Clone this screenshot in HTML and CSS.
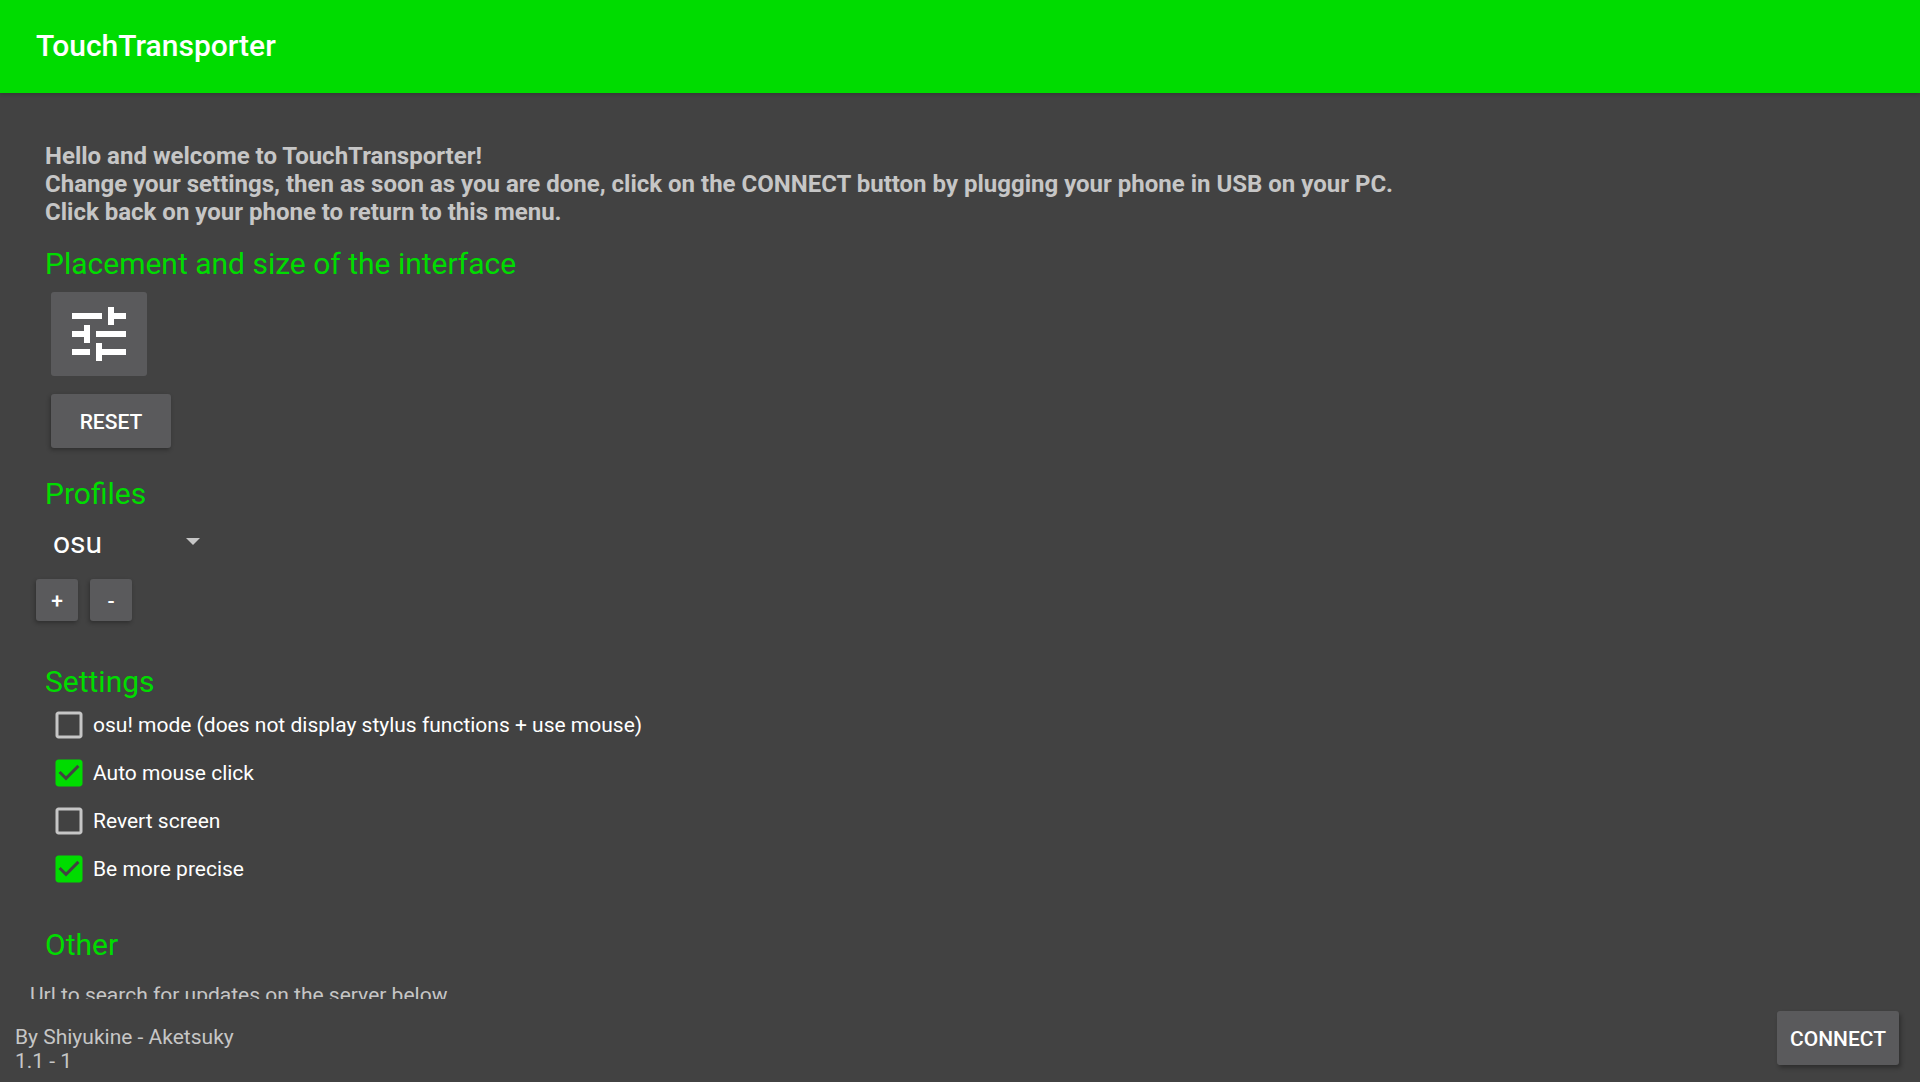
FILE: index.html
```html
<!DOCTYPE html>
<html lang="en">
<head>
    <meta charset="UTF-8">
    <meta name="viewport" content="width=device-width, initial-scale=1.0">
    <title>TouchTransporter</title>
    <link rel="stylesheet" href="styles.css">
</head>
<body>

    <header class="app-bar">
        <h1>TouchTransporter</h1>
    </header>

    <main class="content">
        <p class="intro">
            Hello and welcome to TouchTransporter!<br>
            Change your settings, then as soon as you are done, click on the CONNECT button by plugging your phone in USB on your PC.<br>
            Click back on your phone to return to this menu.
        </p>

        <section class="placement">
            <h2>Placement and size of the interface</h2>
            <div class="placement-buttons">
                <button type="button" class="button button-icon" aria-label="Adjust">
                    <svg viewBox="0 0 24 24" width="72" height="72" fill="currentColor" aria-hidden="true">
                        <path d="M3 17v2h6v-2H3zM3 5v2h10V5H3zm10 16v-2h8v-2h-8v-2h-2v6h2zM7 9v2H3v2h4v2h2V9H7zm14 4v-2H11v2h10zm-6-4h2V7h4V5h-4V3h-2v6z"/>
                    </svg>
                </button>
                <button type="button" class="button button-raised button-reset">RESET</button>
            </div>
        </section>

        <section class="profiles">
            <h2 id="profiles-title">Profiles</h2>
            <select class="profile-select" aria-labelledby="profiles-title">
                <option selected>osu</option>
            </select>
            <div class="profile-buttons">
                <button type="button" class="button button-raised button-small">+</button>
                <button type="button" class="button button-raised button-small">-</button>
            </div>
        </section>

        <section class="settings">
            <h2>Settings</h2>
            <label class="option"><input type="checkbox"> osu! mode (does not display stylus functions + use mouse)</label>
            <label class="option"><input type="checkbox" checked> Auto mouse click</label>
            <label class="option"><input type="checkbox"> Revert screen</label>
            <label class="option"><input type="checkbox" checked> Be more precise</label>
        </section>

        <section class="other">
            <h2>Other</h2>
            <p class="update-note">Url to search for updates on the server below</p>
        </section>
    </main>

    <footer class="bottom-bar">
        <p>By Shiyukine - Aketsuky<br>1.1 - 1</p>
        <button type="button" class="button button-raised button-connect">CONNECT</button>
    </footer>

</body>
</html>
```
FILE: styles.css
```css
* {
    box-sizing: border-box;
}
body {
    display: flex;
    flex-direction: column;
    height: 100vh;
    margin: 0;
    background: #424242;
    color: #c6c6c6;
    font-family: Roboto, sans-serif;
    font-size: 21px;
    line-height: 24px;
}
h1, h2, p {
    margin: 0;
}
h1 {
    color: #fff;
    font-size: 30px;
    font-weight: 500;
    line-height: 36px;
}
h2 {
    padding-left: 45px;
    color: #00dc00;
    font-size: 30px;
    font-weight: 400;
    line-height: 36px;
}

/* Top bar */
.app-bar {
    flex: none;
    padding: 28px 36px 29px;
    background: #00dc00;
    box-shadow: 0 1px 4px rgba(0, 0, 0, 0.2);
    z-index: 1;
}

/* Scrolling area */
.content {
    flex: 1;
    min-height: 0;
    padding-top: 49px;
    overflow: hidden;
}
.intro {
    padding: 0 45px;
    font-size: 24px;
    font-weight: 700;
    line-height: 28px;
}
.placement {
    margin-top: 20px;
}
.profiles {
    margin-top: 28px;
}
.settings {
    margin-top: 43px;
}
.settings h2 {
    margin-bottom: 1px;
}
.other {
    margin-top: 34px;
}
.update-note {
    margin-top: 20px;
    padding-left: 30px;
}

/* Buttons */
.button {
    padding: 2px 0 0;
    border: 0;
    border-radius: 3px;
    background: #5a5a5c;
    color: #fff;
    font: 500 21px/24px Roboto, sans-serif;
}
.button-raised {
    box-shadow: -1px 2px 4px rgba(0, 0, 0, 0.3);
}
.button-icon {
    display: flex;
    align-items: center;
    justify-content: center;
    width: 96px;
    height: 84px;
    padding: 0;
}
.button-reset {
    width: 120px;
    height: 54px;
}
.button-small {
    width: 42px;
    height: 42px;
}
.button-connect {
    width: 122px;
    height: 54px;
    box-shadow: 2px 3px 4px rgba(0, 0, 0, 0.3);
}
.placement-buttons {
    display: flex;
    flex-direction: column;
    gap: 18px;
    padding: 10px 51px 0;
}
.profile-buttons {
    display: flex;
    gap: 12px;
    padding: 18px 36px 0;
}

/* Profile drop-down */
.profile-select {
    display: block;
    width: 166px;
    height: 36px;
    margin: 13px 0 0 45px;
    padding: 0 36px 0 8px;
    border: 0;
    appearance: none;
    background: url("data:image/svg+xml,%3Csvg xmlns='http://www.w3.org/2000/svg' viewBox='0 0 14 7'%3E%3Cpath d='M0 0h14l-7 7z' fill='%23c6c6c6'/%3E%3C/svg%3E") no-repeat right 11px top 13px / 14px 7px;
    color: #fff;
    font: 400 30px/36px Roboto, sans-serif;
}

/* Tick boxes */
.option {
    display: flex;
    align-items: center;
    gap: 6px;
    height: 48px;
    padding-left: 51px;
    color: #fff;
}
.option input {
    width: 36px;
    height: 36px;
    margin: 0;
    appearance: none;
    background: url("data:image/svg+xml,%3Csvg xmlns='http://www.w3.org/2000/svg' viewBox='0 0 24 24'%3E%3Cpath d='M19 5v14H5V5h14m0-2H5c-1.1 0-2 .9-2 2v14c0 1.1.9 2 2 2h14c1.1 0 2-.9 2-2V5c0-1.1-.9-2-2-2z' fill='%23c6c6c6'/%3E%3C/svg%3E") no-repeat center / 36px;
}
.option input:checked {
    background-image: url("data:image/svg+xml,%3Csvg xmlns='http://www.w3.org/2000/svg' viewBox='0 0 24 24'%3E%3Cpath d='M19 3H5c-1.1 0-2 .9-2 2v14c0 1.1.9 2 2 2h14c1.1 0 2-.9 2-2V5c0-1.1-.9-2-2-2zm-9 14l-5-5 1.41-1.41L10 14.17l7.59-7.59L19 8l-9 9z' fill='%2300dc00'/%3E%3C/svg%3E");
}

/* Bottom bar */
.bottom-bar {
    display: flex;
    flex: none;
    align-items: flex-start;
    justify-content: space-between;
    padding: 12px 21px 9px 15px;
}
.bottom-bar p {
    padding-top: 14px;
}
```
